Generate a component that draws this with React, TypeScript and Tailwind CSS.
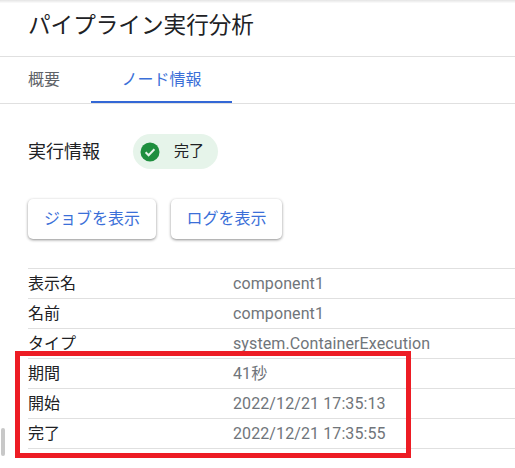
export default function App() {
  const rows = [
    ["表示名", "component1"],
    ["名前", "component1"],
    ["タイプ", "system.ContainerExecution"],
    ["期間", "41秒"],
    ["開始", "2022/12/21 17:35:13"],
    ["完了", "2022/12/21 17:35:55"],
  ];
  const cjk = "font-['Roboto','Noto_Sans_CJK_JP',sans-serif]";
  return (
    <div className={`relative w-[515px] h-[468px] overflow-hidden bg-white ${cjk}`}>
      <div className="h-[57px] border-b border-[#e0e0e0] pl-[28px] pt-[11px] bg-gradient-to-b from-[#e4e4e4] via-white via-[6%] to-white">
        <h1 className="text-[22.6px] leading-[30px] text-[#202124] font-normal">パイプライン実行分析</h1>
      </div>
      <div className="h-[47px] border-b border-[#e0e0e0] flex">
        <div className="w-[91px] pl-[28px] pt-[12px] text-[16px] leading-[22px] text-[#5f6368]">概要</div>
        <div className="w-[141px] h-[46px] border-b-[2px] border-[#3367d6] pt-[12px] text-center text-[16px] leading-[22px] text-[#3b6fd8]">ノード情報</div>
      </div>
      <div className="flex items-center ml-[28px] mt-[30px] h-[35px]">
        <span className="text-[18px] text-[#202124] w-[105px]">実行情報</span>
        <div className="flex items-center h-[35px] w-[85px] rounded-full bg-[#e6f4ea] pl-[7px]">
          <svg width="20" height="20" viewBox="0 0 20 20">
            <circle cx="10" cy="10" r="9.5" fill="#1e8e3e" />
            <path d="M5.6 10.3l3 3 5.8-6" fill="none" stroke="#e6f4ea" strokeWidth="2" />
          </svg>
          <span className="ml-[14px] text-[15px] text-[#202124]">完了</span>
        </div>
      </div>
      <div className="flex gap-[15px] ml-[28px] mt-[30px]">
        <button className="w-[128px] h-[40px] rounded-[5px] bg-white text-[#3b6fd8] text-[16px] shadow-[0_1px_3px_rgba(0,0,0,0.45)]">ジョブを表示</button>
        <button className="w-[111px] h-[40px] rounded-[5px] bg-white text-[#3b6fd8] text-[16px] shadow-[0_1px_3px_rgba(0,0,0,0.45)]">ログを表示</button>
      </div>
      <div className="ml-[28px] mt-[29px] border-t border-[#e0e0e0]">
        {rows.map(([k, v]) => (
          <div key={k} className="flex h-[30px] items-center border-b border-[#e0e0e0]">
            <span className="w-[205px] text-[16px] text-[#202124]">{k}</span>
            <span className="text-[16px] tracking-[0.1px] text-[#70757a]">{v}</span>
          </div>
        ))}
      </div>
      <div className="absolute left-[15px] top-[351px] w-[396px] h-[107px] border-[5px] border-[#ed1c24]" />
      <div className="absolute left-[1px] top-[428px] w-[4px] h-[28px] rounded-sm bg-[#c8c8c8]" />
    </div>
  );
}
